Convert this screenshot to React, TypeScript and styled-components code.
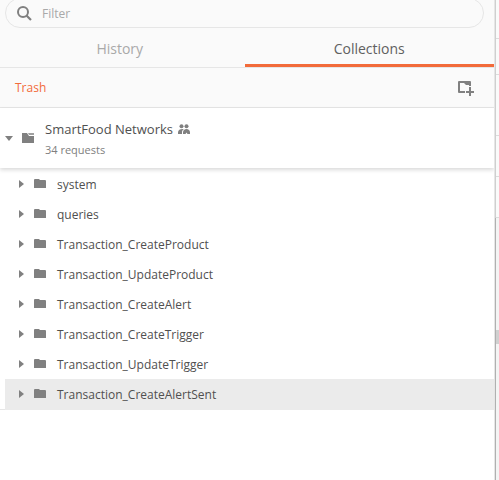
import React, { useState } from "react";
import styled, { createGlobalStyle } from "styled-components";

const GlobalStyle = createGlobalStyle`
  *, *::before, *::after { box-sizing: border-box; }
  body {
    margin: 0;
    background: #fff;
    color: #505050;
    font-family: "Open Sans", "Noto Sans", sans-serif;
    font-size: 12px;
    overflow: hidden;
  }
  button, input { font: inherit; }
`;

const Page = styled.div`
  display: flex;
  min-height: 100vh;
`;

const Sidebar = styled.aside`
  flex: 1;
  min-width: 0;
  background: #fff;
`;

const Top = styled.div`
  background: #fafafa;
`;

const Search = styled.label`
  display: flex;
  align-items: center;
  gap: 10px;
  height: 30px;
  margin: -2px 10px 0 5px;
  padding: 0 11px;
  border: 1px solid #e6e6e6;
  border-radius: 15px;
  color: #808080;
`;

const SearchInput = styled.input`
  flex: 1;
  min-width: 0;
  border: 0;
  padding: 0;
  background: transparent;
  outline: 0;
  color: #505050;
  &::placeholder { color: #a9a9a9; opacity: 1; }
`;

const Tabs = styled.div`
  display: flex;
  height: 40px;
  margin-left: -5px;
  border-bottom: 1px solid #e6e6e6;
`;

const Tab = styled.button<{ $active: boolean }>`
  flex: 1;
  padding: 5px 10px 0;
  border: 0;
  border-bottom: 3px solid ${(p) => (p.$active ? "#f26b3a" : "transparent")};
  background: transparent;
  color: ${(p) => (p.$active ? "#606060" : "#a9a9a9")};
  font-size: 14px;
`;

const Toolbar = styled.div`
  display: flex;
  align-items: center;
  justify-content: space-between;
  height: 40px;
  padding: 0 20px 0 15px;
  border-bottom: 1px solid #e6e6e6;
`;

const TrashLink = styled.a`
  color: #f26b3a;
  text-decoration: none;
`;

const IconButton = styled.button`
  display: flex;
  padding: 2px 0 0;
  border: 0;
  background: transparent;
  color: #808080;
`;

const Collection = styled.button`
  display: flex;
  align-items: center;
  width: 100%;
  height: 60px;
  padding: 0 5px;
  border: 0;
  background: #fff;
  box-shadow: 0 2px 4px rgba(0, 0, 0, 0.15);
  color: #505050;
  text-align: left;
`;

const CollectionText = styled.span`
  display: flex;
  flex-direction: column;
  margin: 3px 0 0 11px;
`;

const CollectionName = styled.span`
  display: flex;
  align-items: center;
  gap: 5px;
  font-size: 13px;
  line-height: 20px;
`;

const CollectionMeta = styled.span`
  color: #808080;
  font-size: 11px;
  line-height: 21px;
`;

const FolderList = styled.ul`
  list-style: none;
  margin: 0;
  padding: 1px 0 0;
  border-bottom: 1px solid #e6e6e6;
`;

const FolderItem = styled.li`
  height: 30px;
  padding-left: 5px;
`;

const FolderRow = styled.button<{ $selected: boolean }>`
  display: flex;
  align-items: center;
  width: 100%;
  height: 31px;
  padding: 0 14px 1px;
  border: 0;
  background: ${(p) => (p.$selected ? "#ebebeb" : "transparent")};
  color: #505050;
  text-align: left;
`;

const FolderName = styled.span`
  margin-left: 11px;
`;

const Glyph = styled.svg`
  display: block;
  flex: none;
  fill: currentColor;
  color: #808080;
`;

const CollectionGlyph = styled(Glyph)`
  margin-left: 9px;
`;

const FolderGlyph = styled(Glyph)`
  margin-left: 10px;
`;

const Resizer = styled.div`
  width: 2px;
  background: linear-gradient(to right, #e6e6e6 50%, #cfcfcf 50%);
`;

const Workspace = styled.main`
  display: flex;
  flex-direction: column;
  width: 3px;
  background: #fafafa;
`;

const Band = styled.div<{ $height: number }>`
  height: ${(p) => p.$height}px;
  border-bottom: 1px solid #dcdcdc;
`;

const Editor = styled.div`
  flex: 1;
  margin-left: -1px;
  padding-top: 112px;
  border-left: 1px solid #b0b0b0;
  background: #f4f4f4;
`;

const Handle = styled.div`
  height: 14px;
  background: #d0d0d0;
`;

const folders = [
  "system",
  "queries",
  "Transaction_CreateProduct",
  "Transaction_UpdateProduct",
  "Transaction_CreateAlert",
  "Transaction_CreateTrigger",
  "Transaction_UpdateTrigger",
  "Transaction_CreateAlertSent",
];

const SearchIcon = () => (
  <Glyph width="15" height="15" viewBox="0 0 15 15" aria-hidden="true">
    <circle cx="6" cy="6" r="5" fill="none" stroke="currentColor" strokeWidth="2" />
    <path d="M9.5 9.5 L14 14" stroke="currentColor" strokeWidth="2.2" />
  </Glyph>
);

const NewFolderIcon = () => (
  <Glyph width="16" height="15" viewBox="0 0 16 15" aria-hidden="true">
    <path d="M1 0h11q1 0 1 1v4h-2V4H8L6 2H2v8h5v2H1q-1 0-1-1V1q0-1 1-1z" />
    <path d="M11 6h2v4h3v2h-3v3h-2v-3H8v-2h3z" />
  </Glyph>
);

const PeopleIcon = () => (
  <Glyph width="12" height="10" viewBox="0 0 12 10" aria-hidden="true">
    <circle cx="3.5" cy="2.2" r="2" />
    <circle cx="8.5" cy="2.2" r="2" />
    <path d="M0 10V8.500C0 6 2 5 4.500 5L6 5.300C4.500 6 4 7 4 8.500V10z" />
    <path d="M5 10V8.500C5 6.500 6.500 5 8.500 5S12 6.500 12 8.500V10H9.500L8.500 8.500L7.500 10z" />
  </Glyph>
);

const CaretDown = () => (
  <Glyph width="8" height="5" viewBox="0 0 8 5" aria-hidden="true">
    <path d="M0 0h8L4 5z" />
  </Glyph>
);

const CaretRight = () => (
  <Glyph width="5" height="8" viewBox="0 0 5 8" aria-hidden="true">
    <path d="M0 0v8l5-4z" />
  </Glyph>
);

const CollectionIcon = () => (
  <CollectionGlyph width="12" height="10" viewBox="0 0 12 10" aria-hidden="true">
    <path d="M0 0h5l2 3h5v7H0z" />
    <path d="M6 0h6v2H7z" opacity="0.75" />
  </CollectionGlyph>
);

const FolderIcon = () => (
  <FolderGlyph width="12" height="10" viewBox="0 0 12 10" aria-hidden="true">
    <path d="M0 1q0-1 1-1h4l1 1h5q1 0 1 1v7H0z" />
  </FolderGlyph>
);

export default function App() {
  const [tab, setTab] = useState("Collections");
  const [selected, setSelected] = useState("Transaction_CreateAlertSent");

  return (
    <>
      <GlobalStyle />
      <Page>
        <Sidebar>
          <Top>
            <Search>
              <SearchIcon />
              <SearchInput type="text" placeholder="Filter" aria-label="Filter" />
            </Search>
            <Tabs role="tablist">
              {["History", "Collections"].map((name) => (
                <Tab
                  key={name}
                  role="tab"
                  aria-selected={tab === name}
                  $active={tab === name}
                  onClick={() => setTab(name)}
                >
                  {name}
                </Tab>
              ))}
            </Tabs>
            <Toolbar>
              <TrashLink href="#trash">Trash</TrashLink>
              <IconButton aria-label="New collection">
                <NewFolderIcon />
              </IconButton>
            </Toolbar>
          </Top>
          <Collection aria-expanded="true">
            <CaretDown />
            <CollectionIcon />
            <CollectionText>
              <CollectionName>
                SmartFood Networks <PeopleIcon />
              </CollectionName>
              <CollectionMeta>34 requests</CollectionMeta>
            </CollectionText>
          </Collection>
          <FolderList>
            {folders.map((name) => (
              <FolderItem key={name}>
                <FolderRow $selected={selected === name} onClick={() => setSelected(name)}>
                  <CaretRight />
                  <FolderIcon />
                  <FolderName>{name}</FolderName>
                </FolderRow>
              </FolderItem>
            ))}
          </FolderList>
        </Sidebar>
        <Resizer />
        <Workspace>
          <Band $height={39} />
          <Band $height={36} />
          <Band $height={61} />
          <Band $height={41} />
          <Band $height={41} />
          <Editor>
            <Handle />
          </Editor>
        </Workspace>
      </Page>
    </>
  );
}
